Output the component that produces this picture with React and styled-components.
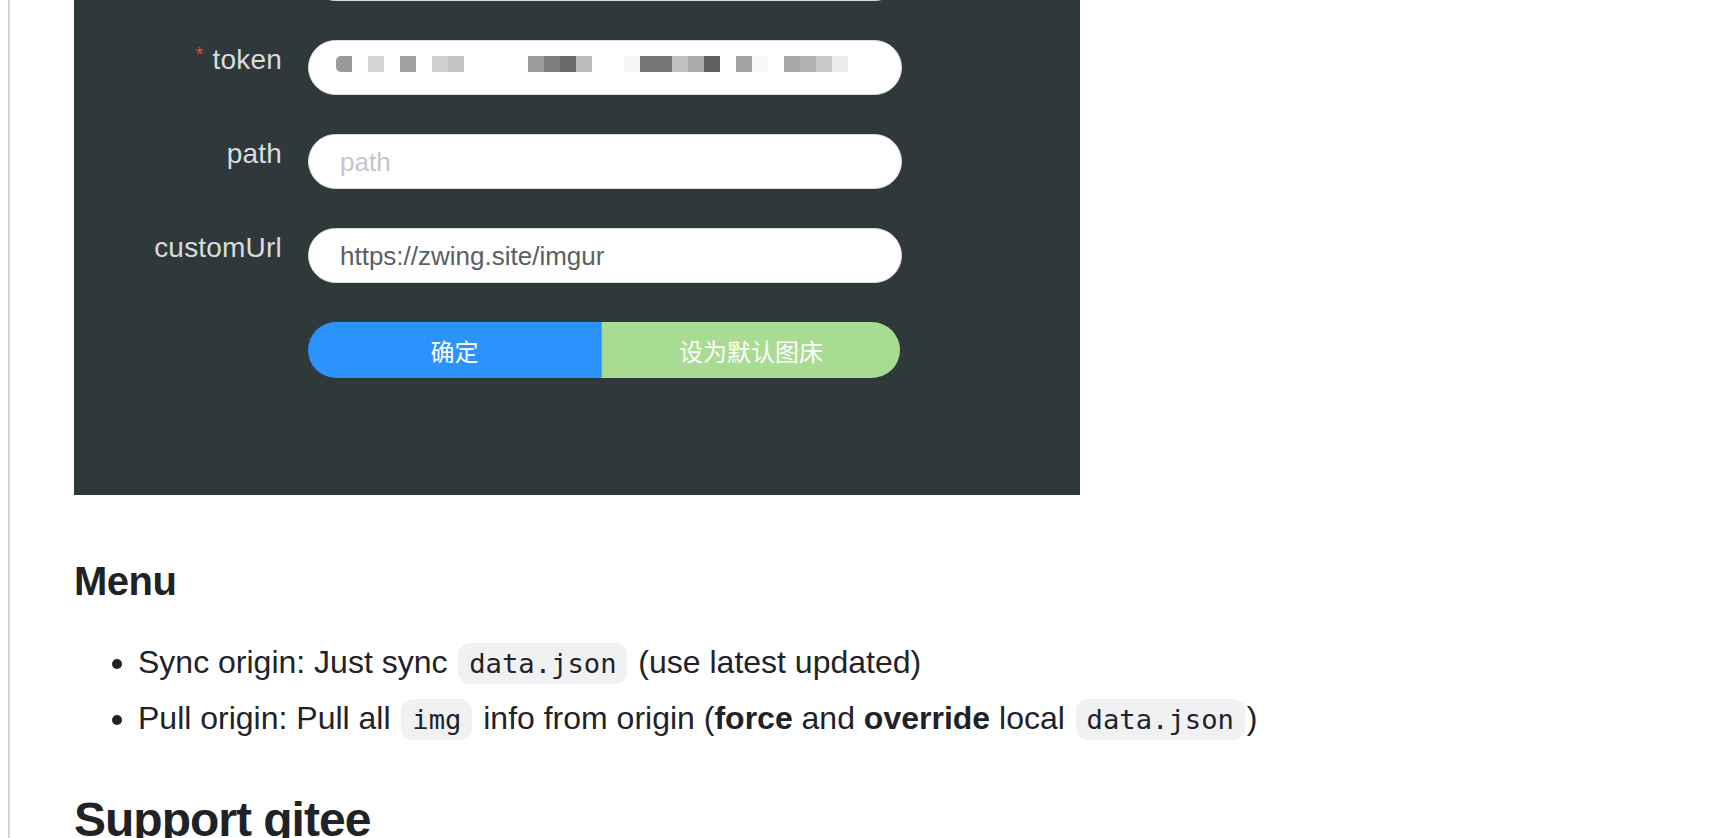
import React from "react";
import styled, { createGlobalStyle } from "styled-components";

const GlobalStyle = createGlobalStyle`
  html, body {
    margin: 0;
    padding: 0;
    background: #ffffff;
  }
  body {
    font-family: "Liberation Sans", Arial, sans-serif;
  }
`;

const Page = styled.div`
  box-sizing: border-box;
  width: 100%;
  height: 838px;
  overflow: hidden;
  padding-left: 8px;
`;

const Article = styled.article`
  min-height: 100%;
  border-left: 2px solid #d0d7de;
  padding-left: 64px;
  color: #1f2328;
  font-size: 32px;
  line-height: 48px;
`;

/* the screenshot of the settings form, embedded in the readme */
const Shot = styled.div`
  width: 1006px;
  height: 495px;
  overflow: hidden;
  background: #2f393b;
  margin-bottom: 61px;
`;

const Form = styled.div`
  display: flex;
  flex-direction: column;
  gap: 39px;
  margin-top: -54px;
`;

const Row = styled.div`
  display: flex;
  align-items: flex-start;
  gap: 26px;
  height: 55px;
`;

const Label = styled.label`
  width: 208px;
  flex-shrink: 0;
  text-align: right;
  font-family: "Liberation Sans", Arial, sans-serif;
  font-size: 28px;
  letter-spacing: 0.2px;
  line-height: 40px;
  color: #dadcdc;
`;

const Required = styled.span`
  position: relative;
  top: -8px;
  color: #e5484d;
  font-size: 20px;
  line-height: 0;
  margin-right: 9px;
`;

const Input = styled.div`
  box-sizing: border-box;
  width: 594px;
  height: 55px;
  display: flex;
  align-items: center;
  padding-left: ${(p) => (p.$mosaic ? "27px" : "31px")};
  background: #ffffff;
  border: 1px solid #d9dcdf;
  border-radius: 28px;
  font-family: "Liberation Sans", Arial, sans-serif;
  font-size: 26px;
  color: ${(p) => (p.$placeholder ? "#c3c6cb" : "#5b5e62")};
`;

const Mosaic = styled.div`
  display: flex;
  margin-bottom: 7px;
`;

const Pixel = styled.span`
  width: 16px;
  height: 16px;
  background: ${(p) => p.$c || "transparent"};
  &:first-child {
    border-radius: 5px 0 0 5px;
  }
`;

const Buttons = styled.div`
  display: flex;
  width: 592px;
  height: 56px;
  margin-left: 234px;
`;

const Button = styled.button`
  box-sizing: border-box;
  width: ${(p) => (p.$green ? "299px" : "293px")};
  border: none;
  margin: 0;
  padding: 0;
  font-family: "Noto Sans CJK SC", sans-serif;
  font-size: 24px;
  color: #ffffff;
  background: ${(p) => (p.$green ? "#a8dc92" : "#2a93fb")};
  border-left: ${(p) => (p.$green ? "1px solid #4aa3f5" : "none")};
  border-radius: ${(p) => (p.$green ? "0 28px 28px 0" : "28px 0 0 28px")};
`;

const H3 = styled.h3`
  margin: 0 0 32px;
  font-size: 40px;
  line-height: 50px;
  font-weight: 700;
  letter-spacing: -0.5px;
`;

const List = styled.ul`
  margin: 0 0 48px;
  padding-left: 64px;
  list-style: disc;
`;

const Item = styled.li`
  & + & {
    margin-top: 8px;
  }
`;

const Code = styled.code`
  font-family: "DejaVu Sans Mono", "Liberation Mono", monospace;
  font-size: 27.2px;
  line-height: 1;
  padding: 5px 10.9px;
  margin: 0 2px;
  border-radius: 12px;
  background: #eff1f3;
`;

const H2 = styled.h2`
  margin: 0;
  font-size: 48px;
  line-height: 60px;
  font-weight: 700;
  letter-spacing: -1px;
  padding-bottom: 14px;
  border-bottom: 2px solid #d8dee4;
`;

const TOKEN_PIXELS = [
  "#9a9a9a", null, "#d4d4d4", null, "#a0a0a0", null, "#cfcfcf", "#c4c4c4",
  null, null, null, null, "#9c9c9c", "#7d7d7d", "#6a6a6a", "#bdbdbd",
  null, null, "#f5f5f5", "#767676", "#777777", "#c2c2c2", "#ababab", "#5f5f5f",
  null, "#a3a3a3", "#f7f7f7", null, "#a9a9a9", "#b2b2b2", "#c9c9c9", "#ececec",
];

const App = () => (
  <Page>
    <GlobalStyle />
    <Article>
      <Shot>
        <Form>
          <Row>
            <Label>repo</Label>
            <Input />
          </Row>
          <Row>
            <Label>
              <Required>*</Required>token
            </Label>
            <Input $mosaic>
              <Mosaic>
                {TOKEN_PIXELS.map((c, i) => (
                  <Pixel key={i} $c={c} />
                ))}
              </Mosaic>
            </Input>
          </Row>
          <Row>
            <Label>path</Label>
            <Input $placeholder>path</Input>
          </Row>
          <Row>
            <Label>customUrl</Label>
            <Input>https://zwing.site/imgur</Input>
          </Row>
          <Buttons>
            <Button>确定</Button>
            <Button $green>设为默认图床</Button>
          </Buttons>
        </Form>
      </Shot>

      <H3>Menu</H3>
      <List>
        <Item>
          Sync origin: Just sync <Code>data.json</Code> (use latest updated)
        </Item>
        <Item>
          Pull origin: Pull all <Code>img</Code> info from origin (<b>force</b> and{" "}
          <b>override</b> local <Code>data.json</Code>)
        </Item>
      </List>

      <H2>Support gitee</H2>
    </Article>
  </Page>
);

export default App;
